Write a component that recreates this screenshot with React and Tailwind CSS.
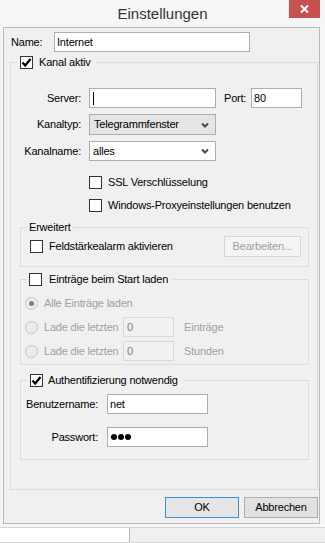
import React from "react";

const Check = ({ checked }) => (
  <span className="flex h-[13px] w-[13px] shrink-0 items-center justify-center border border-[#333333] bg-white">
    {checked && (
      <svg width="11" height="11" viewBox="0 0 11 11">
        <path d="M1.5 5.5 L4.2 8.5 L9.5 2" fill="none" stroke="#000" strokeWidth="2.2" />
      </svg>
    )}
  </span>
);

const Radio = ({ selected }) => (
  <span className="flex h-[13px] w-[13px] shrink-0 items-center justify-center rounded-full border border-[#c4c4c4] bg-[#ececec]">
    {selected && <span className="h-[5px] w-[5px] rounded-full bg-[#7d7d7d]" />}
  </span>
);

const Chevron = () => (
  <svg width="8" height="6" viewBox="0 0 8 6" className="shrink-0">
    <path d="M1 1.5 L4 4.5 L7 1.5" fill="none" stroke="#4a4a4a" strokeWidth="2" />
  </svg>
);

const Field = ({ width, children, className = "" }) => (
  <div
    className={`flex h-[20px] items-center border border-[#abadb3] bg-white px-[2px] ${className}`}
    style={{ width }}
  >
    {children}
  </div>
);

const App = () => {
  return (
    <div className="h-[543px] w-[325px] overflow-hidden bg-[#f6f6f6] font-['Liberation_Sans',Arial,sans-serif] text-[11px] leading-[13px] tracking-[-0.2px] text-black">
      {/* title bar */}
      <div className="relative flex h-[27px] items-center justify-center">
        <span className="text-[15px] leading-[18px] tracking-normal text-[#333333]">Einstellungen</span>
        <div className="absolute left-[289px] top-0 flex h-[18px] w-[31px] items-center justify-center bg-[#c75050]">
          <svg width="9" height="8" viewBox="0 0 9 8">
            <path d="M1 0.5 L8 7.5 M8 0.5 L1 7.5" stroke="#fff" strokeWidth="2" />
          </svg>
        </div>
      </div>

      {/* dialog */}
      <div className="ml-[3px] w-[317px] border border-[#b9b9b9] bg-[#f0f0f0] pb-[5px] pt-[4px]">
        <div className="flex h-[20px] items-center pl-[7px]">
          <span className="w-[43px]">Name:</span>
          <Field width={196}>Internet</Field>
        </div>

        <fieldset className="ml-[6px] mt-[4px] w-[308px] border border-[#dcdcdc] pb-[29px]">
          <legend className="ml-[6px] flex h-[13px] items-center gap-[6px] pl-[3px] pr-[5px]">
            <Check checked />
            <span>Kanal aktiv</span>
          </legend>

          <div className="mt-[19px] flex h-[20px] items-center">
            <span className="w-[70px] text-right">Server:</span>
            <Field width={127} className="ml-[8px] border-[#569de5]">
              <span className="ml-[1px] h-[13px] w-px bg-black" />
            </Field>
            <span className="ml-[8px] w-[27px]">Port:</span>
            <Field width={51}>80</Field>
          </div>

          <div className="mt-[6px] flex h-[21px] items-center">
            <span className="w-[70px] text-right">Kanaltyp:</span>
            <div className="ml-[8px] flex h-[21px] w-[127px] items-center justify-between border border-[#acacac] bg-[#e5e5e5] pl-[4px] pr-[6px]">
              <span>Telegrammfenster</span>
              <Chevron />
            </div>
          </div>

          <div className="mt-[6px] flex h-[20px] items-center">
            <span className="w-[70px] text-right">Kanalname:</span>
            <div className="ml-[8px] flex h-[20px] w-[127px] items-center justify-between border border-[#abadb3] bg-white pl-[3px] pr-[6px]">
              <span>alles</span>
              <Chevron />
            </div>
          </div>

          <div className="ml-[78px] mt-[15px] flex h-[13px] items-center gap-[6px]">
            <Check />
            <span>SSL Verschlüsselung</span>
          </div>
          <div className="ml-[78px] mt-[10px] flex h-[13px] items-center gap-[6px]">
            <Check />
            <span>Windows-Proxyeinstellungen benutzen</span>
          </div>

          {/* Erweitert */}
          <fieldset className="ml-[9px] mt-[9px] w-[289px] border border-[#dcdcdc] pb-[9px] pr-[7px]">
            <legend className="ml-[6px] h-[13px] px-[2px]">Erweitert</legend>
            <div className="mt-[2px] flex h-[21px] items-center justify-between">
              <div className="ml-[9px] flex items-center gap-[6px]">
                <Check />
                <span>Feldstärkealarm aktivieren</span>
              </div>
              <div className="flex h-[21px] w-[77px] items-center justify-center border border-[#d5d5d5] bg-[#f4f4f4] text-[#a0a0a0]">
                Bearbeiten...
              </div>
            </div>
          </fieldset>

          {/* Einträge */}
          <fieldset className="ml-[9px] mt-[6px] w-[289px] border border-[#dcdcdc] pb-[3px]">
            <legend className="ml-[6px] flex h-[13px] items-center gap-[7px] pl-[2px] pr-[5px]">
              <Check />
              <span>Einträge beim Start laden</span>
            </legend>
            <div className="ml-[4px] mt-[7px] flex h-[20px] items-center gap-[6px] text-[#a0a0a0]">
              <Radio selected />
              <span>Alle Einträge laden</span>
            </div>
            <div className="ml-[4px] mt-[4px] flex h-[20px] items-center text-[#a0a0a0]">
              <Radio />
              <span className="ml-[6px] w-[79px]">Lade die letzten</span>
              <div className="flex h-[20px] w-[51px] items-center border border-[#d9d9d9] bg-[#f0f0f0] px-[3px] text-[#7a7a7a]">0</div>
              <span className="ml-[10px]">Einträge</span>
            </div>
            <div className="ml-[4px] mt-[4px] flex h-[20px] items-center text-[#a0a0a0]">
              <Radio />
              <span className="ml-[6px] w-[79px]">Lade die letzten</span>
              <div className="flex h-[20px] w-[51px] items-center border border-[#d9d9d9] bg-[#f0f0f0] px-[3px] text-[#7a7a7a]">0</div>
              <span className="ml-[10px]">Stunden</span>
            </div>
          </fieldset>

          {/* Authentifizierung */}
          <fieldset className="ml-[9px] mt-[9px] w-[289px] border border-[#dcdcdc] pb-[12px]">
            <legend className="ml-[6px] flex h-[13px] items-center gap-[5px] pl-[3px] pr-[6px]">
              <Check checked />
              <span>Authentifizierung notwendig</span>
            </legend>
            <div className="mt-[7px] flex h-[20px] items-center">
              <span className="w-[77px] text-right">Benutzername:</span>
              <Field width={101} className="ml-[9px]">net</Field>
            </div>
            <div className="mt-[13px] flex h-[20px] items-center">
              <span className="w-[77px] text-right">Passwort:</span>
              <Field width={101} className="ml-[9px] gap-[1px] pl-[3px]">
                <span className="h-[6px] w-[6px] rounded-full bg-black" />
                <span className="h-[6px] w-[6px] rounded-full bg-black" />
                <span className="h-[6px] w-[6px] rounded-full bg-black" />
              </Field>
            </div>
          </fieldset>
        </fieldset>

        <div className="mt-[7px] flex justify-end gap-[5px] pr-[1px]">
          <div className="flex h-[21px] w-[74px] items-center justify-center border border-[#3c8fdf] bg-[#e5e5e5]">OK</div>
          <div className="flex h-[21px] w-[74px] items-center justify-center border border-[#acacac] bg-[#e1e1e1]">Abbrechen</div>
        </div>
      </div>

      {/* window below */}
      <div className="mt-[3px] flex h-[16px] border-y border-[#d5d5d5] bg-[#f0f0f0]">
        <div className="w-[130px] border-r border-[#b5b5b5] bg-white" />
      </div>
    </div>
  );
};

export default App;
